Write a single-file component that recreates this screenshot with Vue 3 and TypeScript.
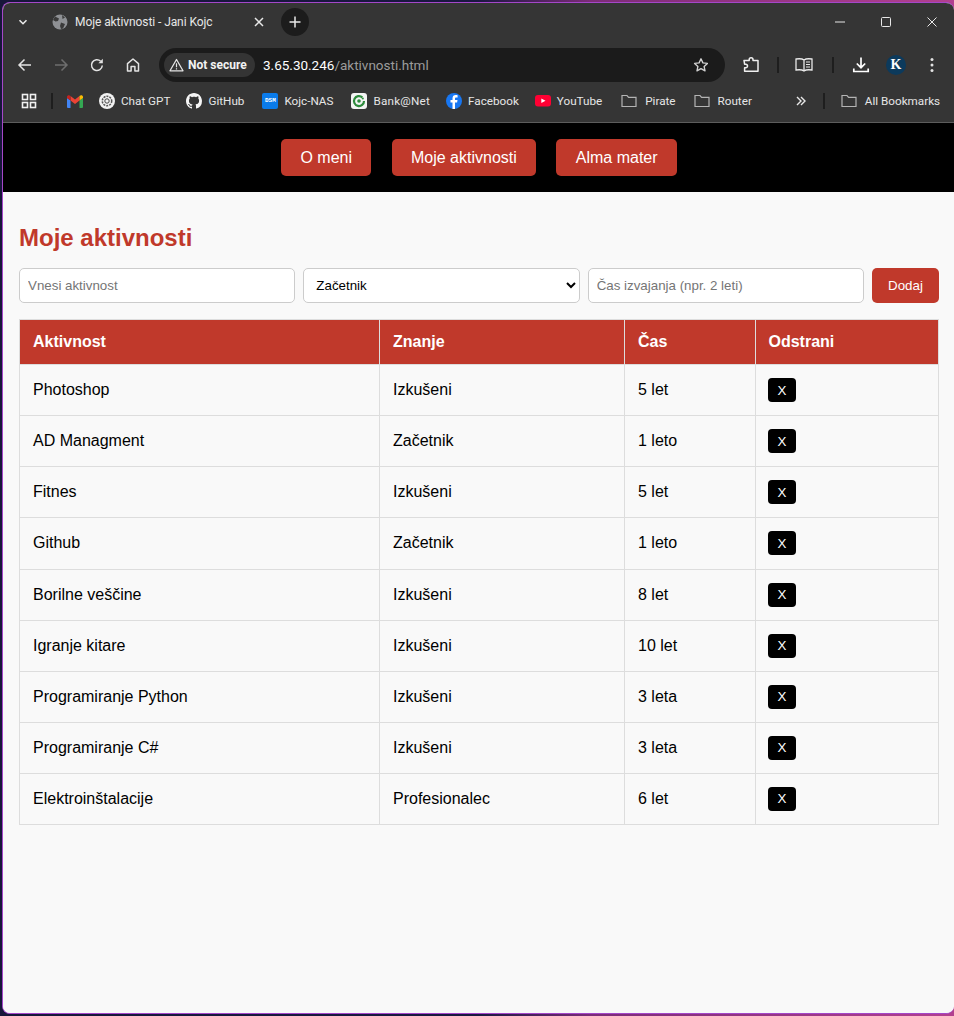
<script setup lang="ts">
interface Row { name: string; level: string; time: string }
const rows: Row[] = [
  { name: 'Photoshop', level: 'Izkušeni', time: '5 let' },
  { name: 'AD Managment', level: 'Začetnik', time: '1 leto' },
  { name: 'Fitnes', level: 'Izkušeni', time: '5 let' },
  { name: 'Github', level: 'Začetnik', time: '1 leto' },
  { name: 'Borilne veščine', level: 'Izkušeni', time: '8 let' },
  { name: 'Igranje kitare', level: 'Izkušeni', time: '10 let' },
  { name: 'Programiranje Python', level: 'Izkušeni', time: '3 leta' },
  { name: 'Programiranje C#', level: 'Izkušeni', time: '3 leta' },
  { name: 'Elektroinštalacije', level: 'Profesionalec', time: '6 let' },
]
const folder = 'M1 2.500h5l1.600 1.800h7.400v9.200H1z'
</script>

<template>
  <div class="desktop">
    <div class="window">
      <div class="chrome">
        <div class="tabs">
          <svg class="tab-chev" width="12" height="12" viewBox="0 0 12 12"><path d="M2.500 4.200 6 7.700l3.500-3.500" fill="none" stroke="#e8e8e8" stroke-width="1.600"/></svg>
          <svg class="globe" width="16" height="16" viewBox="0 0 16 16"><circle cx="8" cy="8" r="7.500" fill="#8e9094"/><path d="M3 2.500 7 4.500 6 7 3.500 7.500 1 6zM9 8.500l4 1.500-2 4.500-2 .5-1-3zM10 1l3 2.500-2.500 1.500z" fill="#3a3a3a"/></svg>
          <span class="tab-title">Moje aktivnosti - Jani Kojc</span>
          <svg class="tab-x" width="10" height="10" viewBox="0 0 10 10"><path d="M1 1l8 8M9 1 1 9" stroke="#e8e8e8" stroke-width="1.500"/></svg>
          <div class="new-tab"><svg width="12" height="12" viewBox="0 0 12 12"><path d="M6 .5v11M.5 6h11" stroke="#e8e8e8" stroke-width="1.500"/></svg></div>
          <div class="win-controls">
            <svg width="12" height="12" viewBox="0 0 12 12"><path d="M1 6h10" stroke="#e8e8e8" stroke-width="1"/></svg>
            <svg width="12" height="12" viewBox="0 0 12 12"><rect x="1.500" y="1.500" width="9" height="9" rx="1" fill="none" stroke="#e8e8e8"/></svg>
            <svg width="12" height="12" viewBox="0 0 12 12"><path d="M1.500 1.500l9 9M10.500 1.500l-9 9" stroke="#e8e8e8" stroke-width="1"/></svg>
          </div>
        </div>

        <div class="toolbar">
          <svg class="tb first" width="16" height="16" viewBox="0 0 16 16"><path d="M14 8H2.500M7.500 2.500 2 8l5.500 5.500" fill="none" stroke="#e3e3e3" stroke-width="1.500"/></svg>
          <svg class="tb" width="16" height="16" viewBox="0 0 16 16"><path d="M2 8h11.500M8.500 2.500 14 8l-5.500 5.500" fill="none" stroke="#6e6e6e" stroke-width="1.500"/></svg>
          <svg class="tb" width="16" height="16" viewBox="0 0 16 16"><path d="M13.300 8.500A5.400 5.400 0 1 1 11.700 4.200" fill="none" stroke="#e3e3e3" stroke-width="1.500"/><path d="M13.800 1.800v4.400H9.400z" fill="#e3e3e3"/></svg>
          <svg class="tb" width="16" height="16" viewBox="0 0 16 16"><path d="M2.500 14V6.600L8 2l5.500 4.600V14h-3.600V9.500H6.100V14z" fill="none" stroke="#e3e3e3" stroke-width="1.500" stroke-linejoin="round"/></svg>
          <div class="omnibox">
            <div class="chip">
              <svg width="15" height="14" viewBox="0 0 15 14"><path d="M7.500 1.500 14 12.800H1z" fill="none" stroke="#e3e3e3" stroke-width="1.300" stroke-linejoin="round"/><path d="M7.500 5.300v4M7.500 10.200v1.200" stroke="#e3e3e3" stroke-width="1.200"/></svg>
              <span>Not secure</span>
            </div>
            <span class="url"><b>3.65.30.246</b>/aktivnosti.html</span>
            <svg class="star" width="16" height="16" viewBox="0 0 16 16"><path d="m8 1.800 1.900 4.100 4.500.5-3.300 3 .9 4.400L8 11.600l-4 2.200.9-4.400-3.300-3 4.500-.5z" fill="none" stroke="#d0d0d0" stroke-width="1.400" stroke-linejoin="round"/></svg>
          </div>
          <svg class="ext" width="18" height="18" viewBox="0 0 18 18"><path d="M2 4.500h5.200V3.600a1.900 1.900 0 0 1 3.800 0v.9H16v10.700H2.600v-3.400h1.100a1.800 1.800 0 0 0 0-3.600H2.600z" fill="none" stroke="#f0f0f0" stroke-width="1.500" stroke-linejoin="round"/></svg>
          <i class="sep one"></i>
          <svg class="read" width="18" height="16" viewBox="0 0 18 16"><path d="M9 3C7.500 1.800 4 1.600 1 2v11c3-.4 6.500-.2 8 1 1.500-1.200 5-1.400 8-1V2c-3-.4-6.500-.2-8 1zm0 0v11" fill="none" stroke="#e8e8e8" stroke-width="1.300"/><path d="M11 5h4M11 7.500h4M11 10h4" stroke="#e8e8e8"/></svg>
          <i class="sep two"></i>
          <svg class="dl" width="18" height="18" viewBox="0 0 18 18"><path d="M9 1.500v10M4.800 7.500 9 11.700l4.200-4.200M1.800 12.500v3h14.400v-3" fill="none" stroke="#fff" stroke-width="1.700"/></svg>
          <div class="avatar">K</div>
          <svg class="dots" width="4" height="16" viewBox="0 0 4 16"><circle cx="2" cy="2.500" r="1.500" fill="#e3e3e3"/><circle cx="2" cy="8" r="1.500" fill="#e3e3e3"/><circle cx="2" cy="13.500" r="1.500" fill="#e3e3e3"/></svg>
        </div>

        <div class="bookmarks">
          <svg class="apps" width="16" height="16" viewBox="0 0 16 16" fill="none" stroke="#f0f0f0" stroke-width="1.600"><rect x="1.500" y="1.500" width="5" height="5"/><rect x="9.500" y="1.500" width="5" height="5"/><rect x="1.500" y="9.500" width="5" height="5"/><rect x="9.500" y="9.500" width="5" height="5"/></svg>
          <i class="bm-sep left"></i>
          <svg class="gmail" width="16" height="13" viewBox="0 0 16 13"><path d="M0 3v9a1 1 0 0 0 1 1h2.500V5.500z" fill="#4285f4"/><path d="M16 3v9a1 1 0 0 1-1 1h-2.500V5.500z" fill="#34a853"/><path d="M3.500 5.500 8 9l4.500-3.500V1L8 4.500 3.500 1z" fill="#ea4335"/><path d="M0 3V2c0-1.500 2-2.300 3.500-1v4.500z" fill="#c5221f"/><path d="M16 3V2c0-1.500-2-2.300-3.500-1v4.500z" fill="#fbbc04"/></svg>
          <a class="bm">
            <svg width="16" height="16" viewBox="0 0 16 16"><circle cx="8" cy="8" r="8" fill="#f2f2f2"/><circle cx="8" cy="8" r="4.700" fill="none" stroke="#555" stroke-width="1.500" stroke-dasharray="2 1"/><circle cx="8" cy="8" r="2.200" fill="none" stroke="#444" stroke-width="1"/></svg>
            <span>Chat GPT</span>
          </a>
          <a class="bm">
            <svg width="16" height="16" viewBox="0 0 16 16"><path fill="#f5f5f5" d="M8 0C3.580 0 0 3.580 0 8c0 3.540 2.290 6.530 5.470 7.590.4.070.55-.17.55-.38 0-.19-.01-.82-.01-1.490-2.010.37-2.530-.49-2.690-.94-.09-.23-.48-.94-.82-1.130-.28-.15-.68-.52-.01-.53.63-.01 1.080.58 1.230.82.720 1.210 1.870.87 2.330.66.070-.52.280-.87.510-1.070-1.780-.2-3.640-.89-3.640-3.950 0-.87.310-1.590.820-2.150-.080-.2-.360-1.020.080-2.120 0 0 .670-.21 2.200.82.640-.18 1.320-.27 2-.27s1.360.09 2 .27c1.530-1.040 2.200-.82 2.200-.82.440 1.100.160 1.920.080 2.120.510.560.820 1.270.820 2.150 0 3.070-1.870 3.750-3.650 3.950.290.250.540.730.540 1.480 0 1.070-.010 1.930-.010 2.200 0 .210.150.460.550.380A8.010 8.010 0 0 0 16 8c0-4.420-3.580-8-8-8z"/></svg>
            <span>GitHub</span>
          </a>
          <a class="bm wide">
            <span class="dsm">DSM</span>
            <span>Kojc-NAS</span>
          </a>
          <a class="bm wide bank">
            <svg width="16" height="16" viewBox="0 0 16 16"><rect width="16" height="16" rx="3" fill="#f4f4f4"/><path d="M11.300 4.300A5 5 0 1 0 13 8" fill="none" stroke="#2e8b3d" stroke-width="2.200"/><circle cx="8" cy="8" r="1.800" fill="#2e8b3d"/><circle cx="11.800" cy="5.500" r="1.100" fill="#2e8b3d"/></svg>
            <span>Bank@Net</span>
          </a>
          <a class="bm">
            <svg width="16" height="16" viewBox="0 0 16 16"><circle cx="8" cy="8" r="8" fill="#1877f2"/><path d="M9 16V9.500h2.100l.4-2.400H9V5.700c0-.8.300-1.300 1.400-1.300h1.200V2.300c-.5-.1-1.200-.2-1.900-.2-2 0-3.200 1.200-3.200 3.300v1.700H4.500v2.400h2V16z" fill="#fff"/></svg>
            <span>Facebook</span>
          </a>
          <a class="bm">
            <svg width="16" height="12" viewBox="0 0 16 12"><rect width="16" height="11.500" rx="3" fill="#ff0033"/><path d="m6.300 3.500 4.200 2.300-4.200 2.300z" fill="#fff"/></svg>
            <span>YouTube</span>
          </a>
          <a class="bm fold pirate">
            <svg width="16" height="16" viewBox="0 0 16 16"><path :d="folder" fill="none" stroke="#b4b4b4" stroke-width="1.200"/></svg>
            <span>Pirate</span>
          </a>
          <a class="bm fold wide">
            <svg width="16" height="16" viewBox="0 0 16 16"><path :d="folder" fill="none" stroke="#b4b4b4" stroke-width="1.200"/></svg>
            <span>Router</span>
          </a>
          <svg class="more" width="10" height="10" viewBox="0 0 10 10"><path d="m1 1 4 4-4 4M5 1l4 4-4 4" fill="none" stroke="#e8e8e8" stroke-width="1.400"/></svg>
          <i class="bm-sep right"></i>
          <a class="bm fold">
            <svg width="16" height="16" viewBox="0 0 16 16"><path :d="folder" fill="none" stroke="#b4b4b4" stroke-width="1.200"/></svg>
            <span>All Bookmarks</span>
          </a>
        </div>
      </div>

      <nav class="site-nav">
        <a class="nav-btn">O meni</a>
        <a class="nav-btn">Moje aktivnosti</a>
        <a class="nav-btn">Alma mater</a>
      </nav>

      <main class="content">
        <h1>Moje aktivnosti</h1>
        <form class="add-form" @submit.prevent>
          <input type="text" placeholder="Vnesi aktivnost" />
          <select>
            <option>Začetnik</option>
            <option>Izkušeni</option>
            <option>Profesionalec</option>
          </select>
          <input type="text" placeholder="Čas izvajanja (npr. 2 leti)" />
          <button type="submit">Dodaj</button>
        </form>
        <table>
          <colgroup>
            <col class="c1" /><col class="c2" /><col class="c3" /><col />
          </colgroup>
          <thead>
            <tr><th>Aktivnost</th><th>Znanje</th><th>Čas</th><th>Odstrani</th></tr>
          </thead>
          <tbody>
            <tr v-for="r in rows" :key="r.name">
              <td>{{ r.name }}</td>
              <td>{{ r.level }}</td>
              <td>{{ r.time }}</td>
              <td><button class="del" type="button">X</button></td>
            </tr>
          </tbody>
        </table>
      </main>
    </div>
  </div>
</template>

<style>
html, body { margin: 0; background: #14102c; overflow: hidden; }
</style>

<style scoped>
.desktop {
  width: 954px;
  height: 1016px;
  box-sizing: border-box;
  padding: 2px 0 2px 2px;
  background: linear-gradient(90deg, #17163a 0%, #1a1740 50%, #7c2c78 62%, #b2408f 100%);
}
.window {
  height: 100%;
  box-sizing: border-box;
  display: flex;
  flex-direction: column;
  overflow: hidden;
  border: 1px solid #a447c9;
  border-right: 0;
  border-radius: 8px;
  background: #f9f9f9;
}
.chrome {
  height: 120px;
  box-sizing: border-box;
  flex: none;
  background: #353535;
  border-bottom: 1px solid #5c5c5c;
  color: #e6e6e6;
  font-family: Roboto, "Noto Sans", sans-serif;
  font-size: 11.700px;
}
.chrome svg { flex: none; display: block; }
.tabs {
  height: 38px;
  display: flex;
  align-items: center;
}
.tab-chev { margin-left: 14px; }
.globe { margin-left: 23px; }
.tab-title { margin-left: 7px; width: 172px; white-space: nowrap; color: #e6e6e6; font-size: 12px; letter-spacing: -.08px; }
.tab-x { margin-left: 7px; }
.new-tab {
  width: 28px;
  height: 28px;
  margin-left: 17px;
  border-radius: 50%;
  background: #1c1c1c;
  display: flex;
  align-items: center;
  justify-content: center;
}
.win-controls {
  margin-left: auto;
  margin-right: 16px;
  display: flex;
  gap: 34px;
}
.toolbar {
  height: 44px;
  margin-top: 2px;
  display: flex;
  align-items: center;
}
.tb { margin-left: 20px; }
.tb.first { margin-left: 14px; }
.omnibox {
  width: 566px;
  height: 34px;
  margin-left: 18px;
  box-sizing: border-box;
  padding: 0 16px 0 5px;
  display: flex;
  align-items: center;
  border-radius: 17px;
  background: #1b1b1b;
}
.chip {
  width: 91px;
  height: 24px;
  box-sizing: border-box;
  padding-left: 5px;
  display: flex;
  align-items: center;
  gap: 4px;
  border-radius: 12px;
  background: #343434;
  font-weight: 700;
  font-size: 12px;
  color: #f2f2f2;
  white-space: nowrap;
}
.url {
  margin-left: 8px;
  font-size: 13.500px;
  color: #9b9b9b;
  white-space: nowrap;
}
.url b { font-weight: 400; color: #fff; }
.star { margin-left: auto; }
.ext { margin-left: 17px; }
.sep { width: 2px; height: 16px; background: #1e1e1e; flex: none; }
.sep.one { margin-left: 17px; }
.read { margin-left: 16px; }
.sep.two { margin-left: 19px; }
.dl { margin-left: 18px; }
.avatar {
  width: 20px;
  height: 20px;
  margin-left: 16px;
  flex: none;
  border-radius: 50%;
  background: #0c3a5c;
  color: #fff;
  font: 700 14px/20px "Liberation Serif", serif;
  text-align: center;
}
.dots { margin-left: 24px; }
.bookmarks {
  height: 28px;
  display: flex;
  align-items: center;
}
.apps { margin-left: 18px; }
.gmail { margin-left: 14px; }
.bm-sep { width: 2px; height: 16px; background: #1e1e1e; flex: none; }
.bm-sep.left { margin-left: 14px; }
.bm-sep.right { margin-left: 17px; }
.bm {
  margin-left: 16px;
  display: flex;
  align-items: center;
  gap: 6px;
  white-space: nowrap;
}
.bm.wide { margin-left: 18px; }
.bm.bank span { letter-spacing: .22px; }
.bm.fold { gap: 8px; }
.bm.pirate { margin-left: 19px; }
.dsm {
  width: 16px;
  height: 16px;
  border-radius: 2px;
  background: #0a7bea;
  color: #fff;
  font: 700 6px/16px "Liberation Mono", monospace;
  text-align: center;
}
.more { margin-left: 44px; }

.site-nav {
  height: 69px;
  flex: none;
  box-sizing: border-box;
  padding-left: 1px;
  display: flex;
  align-items: center;
  justify-content: center;
  gap: 20.200px;
  background: #000;
}
.nav-btn {
  height: 37px;
  box-sizing: border-box;
  padding: 0 19.400px;
  border-radius: 5px;
  background: #c0392b;
  color: #fff;
  font: 16px/37px "Liberation Sans", Arial, sans-serif;
}
.content {
  flex: 1;
  padding: 32px 15px 0 16px;
  background: #f9f9f9;
  font-family: "Liberation Sans", Arial, sans-serif;
  color: #000;
}
h1 {
  margin: 0 0 17px;
  font-size: 24px;
  line-height: 27px;
  font-weight: 700;
  color: #c0392b;
}
.add-form {
  display: flex;
  gap: 8px;
  margin-bottom: 16px;
}
.add-form input,
.add-form select {
  flex: 1 1 0;
  min-width: 0;
  height: 35px;
  box-sizing: border-box;
  padding: 8px;
  border: 1px solid #ccc;
  border-radius: 5px;
  background: #fff;
  color: #000;
  font: 13.333px "Liberation Sans", Arial, sans-serif;
}
.add-form input::placeholder { color: #757575; }
.add-form button {
  flex: none;
  width: 67px;
  height: 35px;
  padding: 0;
  border: 0;
  border-radius: 5px;
  background: #c0392b;
  color: #fff;
  font: 13.333px "Liberation Sans", Arial, sans-serif;
}
table {
  width: 920px;
  table-layout: fixed;
  border-collapse: collapse;
  font-size: 16px;
}
.c1 { width: 360px; }
.c2 { width: 245px; }
.c3 { width: 131px; }
th, td {
  box-sizing: border-box;
  border: 1px solid #ddd;
  padding: 0 13px;
  text-align: left;
  vertical-align: middle;
}
th:last-child { padding-left: 12.500px; }
td:last-child { padding-left: 12px; }
th {
  height: 45.150px;
  background: #c0392b;
  color: #fff;
  font-weight: 700;
}
td { height: 51.100px; }
.del {
  display: block;
  width: 28px;
  height: 24px;
  padding: 0;
  border: 0;
  border-radius: 4px;
  background: #000;
  color: #fff;
  font: 13.333px "Liberation Sans", Arial, sans-serif;
}
</style>
